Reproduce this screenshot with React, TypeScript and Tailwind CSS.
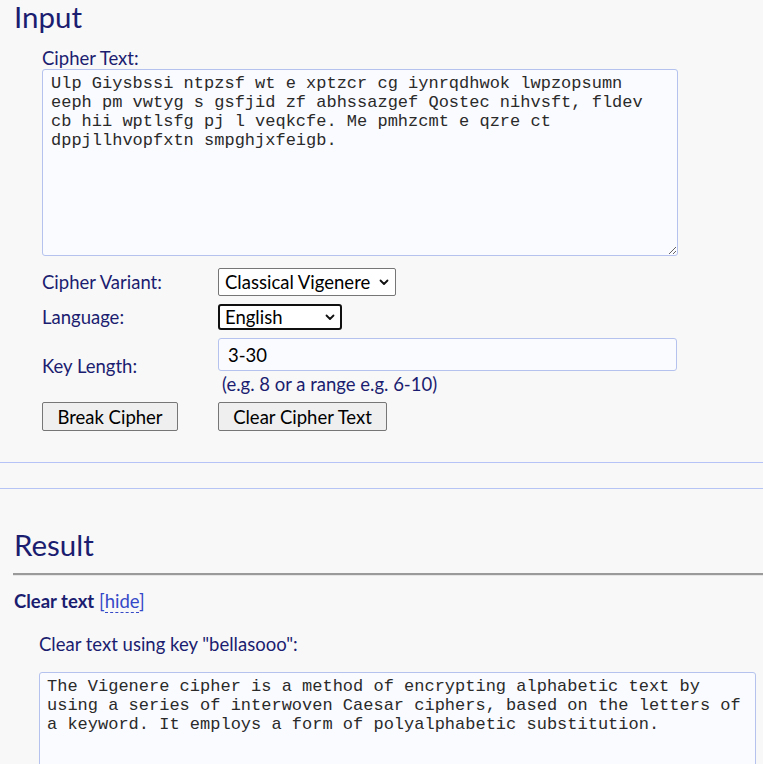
import React from "react";

const sans = "font-['Lato','Noto_Sans',sans-serif]";
const mono = "font-['Liberation_Mono','Courier_New',monospace]";

export default function App() {
  return (
    <div className={`min-h-[764px] w-full overflow-hidden bg-[#f8f8f8] ${sans} text-[#1b1d70]`}>
      <h2 className="pl-[14px] pt-[1px] text-[29.5px] leading-[32px] font-normal">Input</h2>
      <div className="pl-[42px] pt-[14px]">
        <div className="text-[18.5px] leading-[22px]">Cipher Text:</div>
        <textarea
          readOnly
          className={`block h-[187px] w-[636px] resize-y rounded-[3px] border border-[#b5c2ee] bg-[#fafbff] px-[8px] py-[4px] text-[17px] leading-[19px] text-[#2a2a2a] ${mono} outline-none`}
          defaultValue={
            "Ulp Giysbssi ntpzsf wt e xptzcr cg iynrqdhwok lwpzopsumn eeph pm vwtyg s gsfjid zf abhssazgef Qostec nihvsft, fldev cb hii wptlsfg pj l veqkcfe. Me pmhzcmt e qzre ct dppjllhvopfxtn smpghjxfeigb."
          }
        />
        <div className="mt-[12px] grid grid-cols-[176px_1fr] items-center gap-y-[8px] text-[18.5px] leading-[20px]">
          <div>Cipher Variant:</div>
          <div>
            <div className="flex h-[28px] w-[178px] items-center justify-between rounded-[2px] border border-[#767676] bg-white pl-[6px] pr-[5px] text-black">
              <span>Classical Vigenere</span>
              <Chevron />
            </div>
          </div>
          <div>Language:</div>
          <div>
            <div className="flex h-[26px] w-[124px] items-center justify-between rounded-[3px] border-2 border-[#101010] bg-white pl-[5px] pr-[4px] text-black">
              <span>English</span>
              <Chevron />
            </div>
          </div>
          <div>Key Length:</div>
          <div>
            <div className="flex h-[33px] w-[459px] items-center rounded-[3px] border border-[#b5c2ee] bg-[#fafbff] pl-[9px] text-black">
              3-30
            </div>
            <div className="mt-[3px] pl-[4px] leading-[20px]">(e.g. 8 or a range e.g. 6-10)</div>
          </div>
          <div>
            <button className="block h-[29px] w-[136px] rounded-[2px] border border-[#767676] bg-[#efefef] leading-[20px] text-black">
              Break Cipher
            </button>
          </div>
          <div>
            <button className="block h-[29px] w-[169px] rounded-[2px] border border-[#767676] bg-[#efefef] leading-[20px] text-black">
              Clear Cipher Text
            </button>
          </div>
        </div>
      </div>
      <div className="mt-[31px] border-t border-[#b6c4f5]" />
      <div className="mt-[25px] border-t border-[#b6c4f5]" />
      <div className="pl-[13px]">
        <h2 className="mt-[40px] pl-[1px] text-[29.5px] leading-[32px] font-normal">Result</h2>
        <div className="mt-[12px] border-t-2 border-[#9a9a9a]" />
        <div className="border-t border-[#e6e6e6]" />
        <div className="mt-[14px] pl-[1px] text-[18.5px] leading-[22px]">
          <span className="font-bold">Clear text</span>{" "}
          <span className="text-[#3448c8]">
            [<span className="border-b border-dashed border-[#3448c8]">hide</span>]
          </span>
        </div>
        <div className="mt-[21px] pl-[26px] text-[18.5px] leading-[22px]">Clear text using key "bellasooo":</div>
        <textarea
          readOnly
          className={`ml-[26px] mt-[17px] block h-[120px] w-[717px] resize-none rounded-[3px] border border-[#b5c2ee] bg-[#fafbff] px-[7px] py-[4px] text-[17px] leading-[19px] text-[#2a2a2a] ${mono} outline-none`}
          defaultValue={
            "The Vigenere cipher is a method of encrypting alphabetic text by using a series of interwoven Caesar ciphers, based on the letters of a keyword. It employs a form of polyalphabetic substitution."
          }
        />
      </div>
    </div>
  );
}

function Chevron() {
  return (
    <svg width="12" height="12" viewBox="0 0 12 12" fill="none">
      <path d="M2.5 4.5 L6 8 L9.5 4.5" stroke="#111" strokeWidth="1.8" strokeLinecap="round" strokeLinejoin="round" />
    </svg>
  );
}
